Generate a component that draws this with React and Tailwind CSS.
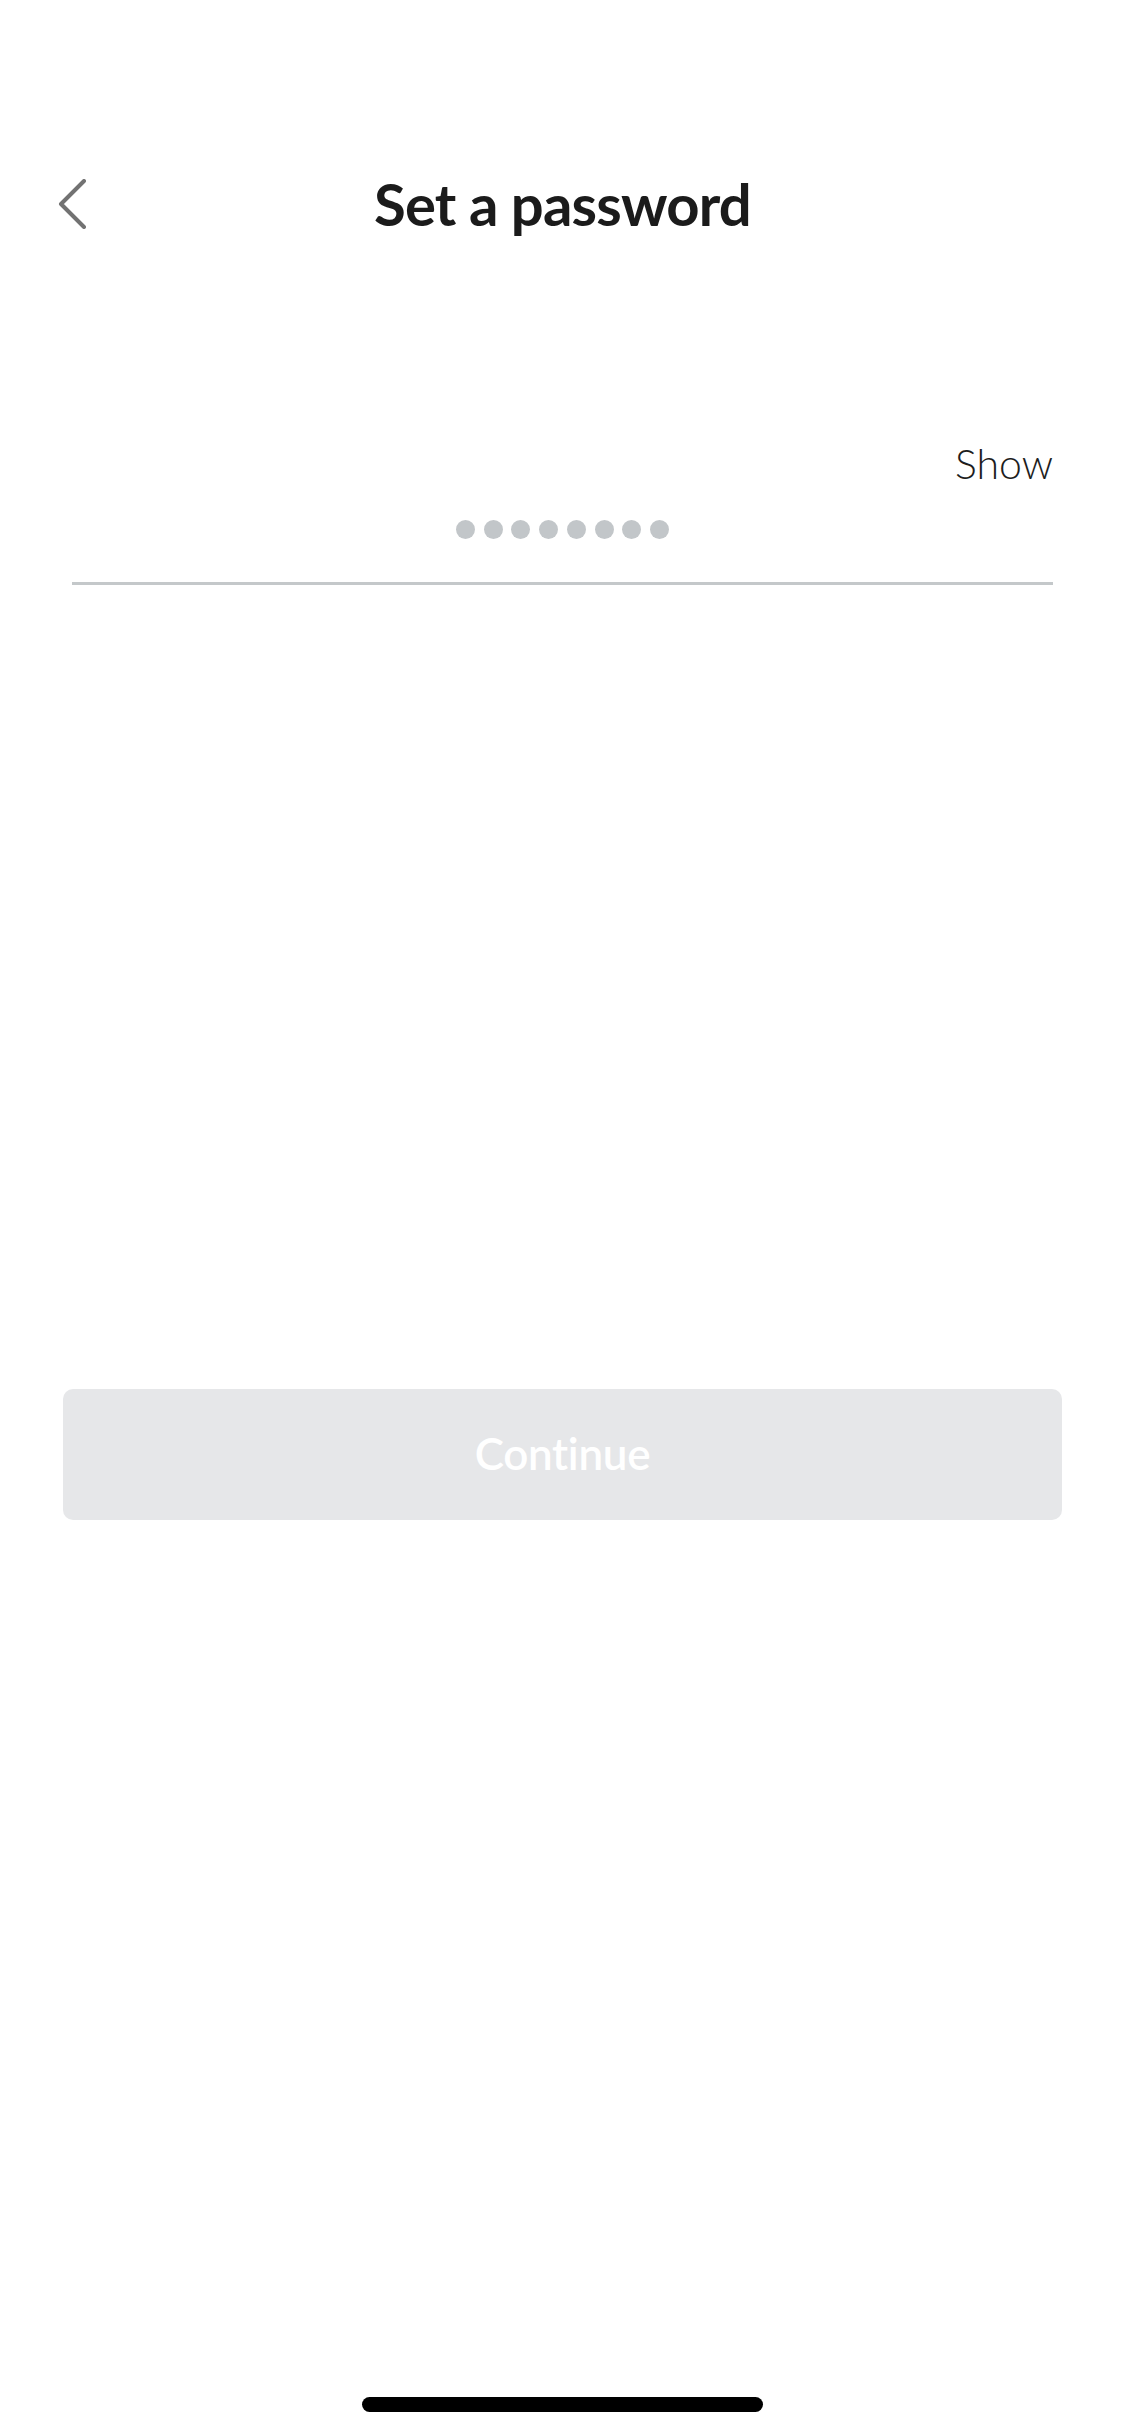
export default function App() {
  const dots = [0, 1, 2, 3, 4, 5, 6, 7];
  return (
    <div
      className="w-full h-[2436px] bg-white flex flex-col"
      style={{ fontFamily: "Lato, 'Open Sans', sans-serif" }}
    >
      <div className="mt-[144px] h-[120px] grid grid-cols-[1fr_auto_1fr] items-center">
        <div className="pl-[57px] flex items-center">
          <svg width="30" height="50" viewBox="0 0 30 50" fill="none">
            <polyline
              points="27,2 4,25 27,48"
              stroke="#727272"
              strokeWidth="4"
              strokeLinecap="round"
              strokeLinejoin="round"
            />
          </svg>
        </div>
        <div className="text-[58px] leading-[60px] font-bold text-[#1b1b1b] tracking-[-0.8px]">
          Set a password
        </div>
        <div />
      </div>

      <div className="ml-[72px] w-[981px] flex flex-col">
        <div className="mt-[179px] flex justify-end pr-0">
          <span className="text-[41px] leading-[42px] font-light text-[#1d1d1d]">Show</span>
        </div>
        <div className="mt-[34px] h-[20px] flex justify-center items-center gap-[8.7px]">
          {dots.map((d) => (
            <div key={d} className="w-[19px] h-[19px] rounded-full bg-[#c2c6c9]" />
          ))}
        </div>
        <div className="mt-[43px] h-[3px] bg-[#c4c8ca]" />
      </div>

      <div className="mt-[804px] ml-[63px] w-[999px] h-[131px] rounded-[10px] bg-[#e6e7e9] flex items-center justify-center">
        <span className="text-[44px] leading-[44px] font-semibold text-white tracking-[-0.3px] -mt-[3px]">Continue</span>
      </div>

      <div className="mt-auto mb-[24px] mx-auto w-[401px] h-[15px] rounded-full bg-black" />
    </div>
  );
}
